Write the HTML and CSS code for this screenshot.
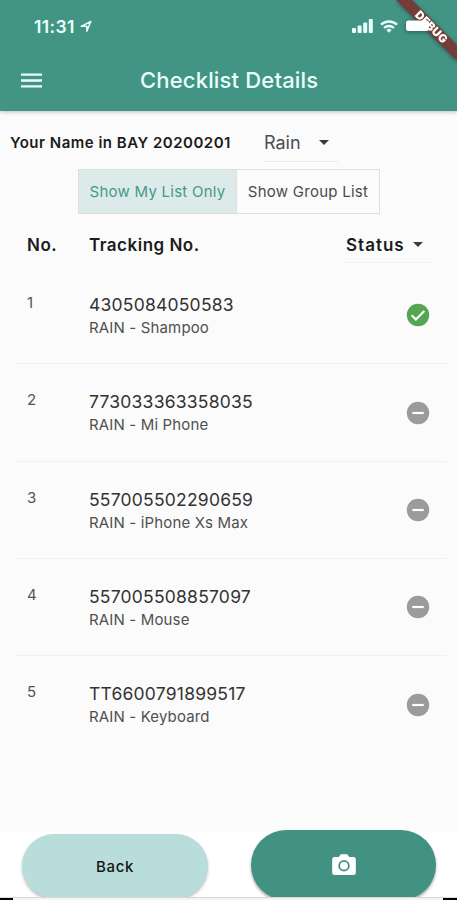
FILE: index.html
```html
<!DOCTYPE html>
<html lang="en">
<head>
<meta charset="utf-8">
<title>Checklist Details</title>
<link rel="stylesheet" href="styles.css">
</head>
<body>
<div class="screen">
  <header class="appbar">
    <div class="statusbar">
      <span class="time">11:31</span>
      <svg class="location" width="12" height="13" viewBox="0 0 14 14"><path d="M1.2 6.8 12.6 1.2 8 12.6V6.8Z" fill="none" stroke="#e6fffa" stroke-width="1.7" stroke-linejoin="round"/></svg>
      <svg class="signal" width="21" height="14" viewBox="0 0 21 14" fill="#eafffb"><rect x="0" y="9" width="4" height="5" rx="1"/><rect x="5.6" y="6.5" width="4" height="7.5" rx="1"/><rect x="11.2" y="3.5" width="4" height="10.5" rx="1"/><rect x="16.8" y="0" width="4" height="14" rx="1"/></svg>
      <svg class="wifi" width="18" height="13" viewBox="0 0 18 13" fill="none" stroke="#eafffb" stroke-width="2.3"><path d="M1 4.7a11.6 11.6 0 0 1 16 0"/><path d="M4 8a7.2 7.2 0 0 1 10 0"/><path d="m9 12.7 2.6-2.8a3.8 3.8 0 0 0-5.2 0Z" fill="#eafffb" stroke="none"/></svg>
    </div>
    <div class="titlebar">
      <svg class="menu" width="21" height="15" viewBox="0 0 21 15" fill="#eafffb"><path d="M0 .4h21v2.4H0zM0 6.3h21v2.4H0zM0 12.2h21v2.4H0z"/></svg>
      <h1 class="title">Checklist Details</h1>
    </div>
  </header>
  <svg class="ribbon" width="65" height="66" viewBox="392 0 65 66">
    <path class="ribbon-band" d="M396 0h16l45 45v16Z"/>
    <rect x="406" y="20.5" width="23" height="10.5" rx="2.5" fill="#fff"/>
    <text class="ribbon-text" transform="translate(431.5 27) rotate(45)" y="4" text-anchor="middle">DEBUG</text>
  </svg>

  <main class="content">
    <div class="owner">
      <span class="owner-name">Your Name in BAY 20200201</span>
      <span class="select person"><span class="person-name">Rain</span><i class="caret"></i></span>
    </div>
    <div class="toggle">
      <span class="option selected"><span class="mine">Show My List Only</span></span>
      <span class="option"><span class="group">Show Group List</span></span>
    </div>
    <div class="table-head">
      <span class="col-no">No.</span>
      <span class="col-track">Tracking No.</span>
      <span class="select status"><span>Status</span><i class="caret"></i></span>
    </div>
    <ul class="list">
      <li class="item"><span class="num">1</span><div class="info"><div class="code">4305084050583</div><div class="desc">RAIN - Shampoo</div></div>
        <svg class="state" width="24" height="24" viewBox="0 0 24 24"><circle cx="12" cy="12" r="11.2" fill="#55a653"/><path d="m5.7 12.3 4.2 4.2 8.4-8.5" fill="none" stroke="#fff" stroke-width="2.2"/></svg></li>
      <li class="item"><span class="num">2</span><div class="info"><div class="code">773033363358035</div><div class="desc">RAIN - Mi Phone</div></div>
        <svg class="state" width="24" height="24" viewBox="0 0 24 24"><circle cx="12" cy="12" r="11.2" fill="#9b9b9b"/><path d="M6.3 12h11.4" stroke="#fff" stroke-width="2.2"/></svg></li>
      <li class="item"><span class="num">3</span><div class="info"><div class="code">557005502290659</div><div class="desc">RAIN - iPhone Xs Max</div></div>
        <svg class="state" width="24" height="24" viewBox="0 0 24 24"><circle cx="12" cy="12" r="11.2" fill="#9b9b9b"/><path d="M6.3 12h11.4" stroke="#fff" stroke-width="2.2"/></svg></li>
      <li class="item"><span class="num">4</span><div class="info"><div class="code">557005508857097</div><div class="desc">RAIN - Mouse</div></div>
        <svg class="state" width="24" height="24" viewBox="0 0 24 24"><circle cx="12" cy="12" r="11.2" fill="#9b9b9b"/><path d="M6.3 12h11.4" stroke="#fff" stroke-width="2.2"/></svg></li>
      <li class="item"><span class="num">5</span><div class="info"><div class="code">TT6600791899517</div><div class="desc">RAIN - Keyboard</div></div>
        <svg class="state" width="24" height="24" viewBox="0 0 24 24"><circle cx="12" cy="12" r="11.2" fill="#9b9b9b"/><path d="M6.3 12h11.4" stroke="#fff" stroke-width="2.2"/></svg></li>
    </ul>
  </main>

  <footer class="actions">
    <button class="btn back"><span>Back</span></button>
    <button class="btn camera" aria-label="Camera"><svg width="24" height="22" viewBox="0 0 24 22"><path d="M2.5 3h4.2l2.1-2.7h6.4L17.3 3h4.2A2.3 2.3 0 0 1 23.8 5.3v13.4a2.3 2.3 0 0 1-2.3 2.3h-19A2.3 2.3 0 0 1 .2 18.7V5.3A2.3 2.3 0 0 1 2.5 3Z" fill="#fff"/><circle cx="12" cy="11.7" r="4.8" fill="none" stroke="#419282" stroke-width="1.8"/></svg></button>
  </footer>
  <div class="edge"></div>
</div>
</body>
</html>
```
FILE: styles.css
```css
* { box-sizing: border-box; }
body { margin: 0; background: #fafafa; font-family: Inter, "Liberation Sans", sans-serif; color: #1c1c1c; }
.screen { position: relative; width: 457px; height: 900px; overflow: hidden; display: flex; flex-direction: column; background: #fbfbfb; }
.appbar { flex: none; height: 111px; background: #429485; color: #e8fffb; box-shadow: 0 1px 4px rgba(50, 40, 70, .3); }
.statusbar { height: 50px; padding: 2px 0 0 34px; display: flex; align-items: center; }
.time { width: 43px; font-size: 17.5px; font-weight: 600; letter-spacing: .35px; white-space: nowrap; }
.location { margin-left: 3px; }
.signal { margin-left: 260px; }
.wifi { margin-left: 7px; }
.titlebar { height: 60px; display: flex; align-items: center; padding-left: 21px; }
.title { margin: 0 0 0 98px; font-size: 22px; font-weight: 500; letter-spacing: .17px; white-space: nowrap; }
.ribbon { position: absolute; top: 0; right: 0; filter: drop-shadow(0 1px 2px rgba(0, 0, 0, .4)); }
.ribbon-band { fill: #743c38; }
.ribbon-text { fill: #fff; font-size: 11.5px; font-weight: 900; letter-spacing: .1px; }

.content { flex: none; height: 719px; padding-top: 13px; white-space: nowrap; }
.owner { height: 38px; display: flex; align-items: center; padding-left: 10px; }
.owner-name { width: 254px; padding-bottom: 1px; font-size: 15px; font-weight: 600; letter-spacing: .5px; }
.select { display: flex; align-items: center; }
.caret { border: 5.5px solid transparent; border-top-color: #3c3c3c; border-bottom: 0; }
.person { height: 37px; width: 74px; border-bottom: 1px solid #ececec; justify-content: space-between; padding-right: 9px; font-size: 18px; color: #4d4d4d; }
.toggle { width: 302px; height: 45px; margin: 7px 0 0 78px; display: flex; border: 1px solid #dedfdf; font-size: 15px; letter-spacing: .25px; color: #4b4b4b; }
.option { width: 143px; display: flex; align-items: center; justify-content: center; }
.option.selected { width: 158px; flex: none; background: #dcebe9; color: #45998a; border-right: 1px solid #dedfdf; }
.table-head { height: 53px; display: flex; align-items: center; padding: 9px 0 0 27px; font-size: 17px; font-weight: 600; letter-spacing: .5px; }
.col-no { width: 62px; }
.col-track { width: 257px; }
.status { height: 36px; width: 85px; padding-right: 8px; justify-content: space-between; border-bottom: 1px solid #f1f1f1; letter-spacing: 1px; }
.list { list-style: none; margin: 0; padding: 0 10px 0 16px; }
.item { height: 97.3px; display: flex; padding-left: 11px; border-bottom: 1px solid #f0f0f0; }
.item:last-child { border-bottom: 0; }
.num { width: 62px; padding-top: 27px; font-size: 15px; line-height: 18px; color: #555; }
.info { width: 316.6px; padding-top: 26px; }
.code { font-size: 17.5px; line-height: 24px; letter-spacing: .22px; color: #333; }
.desc { font-size: 15px; line-height: 22px; letter-spacing: .15px; color: #505050; }
.state { margin-top: 36.4px; flex: none; }

.actions { flex: none; height: 68px; background: linear-gradient(#fbfbfb 2px, #fff 2px); display: flex; align-items: flex-start; padding-left: 22px; overflow: hidden; border-bottom: 1px solid #d7d7d7; }
.btn { border: 0; padding: 0; display: flex; align-items: center; justify-content: center; font-family: inherit; }
.back { width: 186px; height: 64px; margin-top: 4px; border-radius: 32px; background: #b9dddb; font-size: 15px; font-weight: 500; letter-spacing: .6px; color: #151515; box-shadow: 0 2px 3px rgba(0, 0, 0, .25); }
.camera { width: 185px; height: 70px; margin: 0 0 0 43px; border-radius: 35px; background: #419282; box-shadow: 0 2px 3px rgba(0, 0, 0, .35); }
.edge { height: 2px; background: linear-gradient(90deg, #000 13px, #f4f4f4 13px, #f4f4f4 443px, #000 443px); }
```
